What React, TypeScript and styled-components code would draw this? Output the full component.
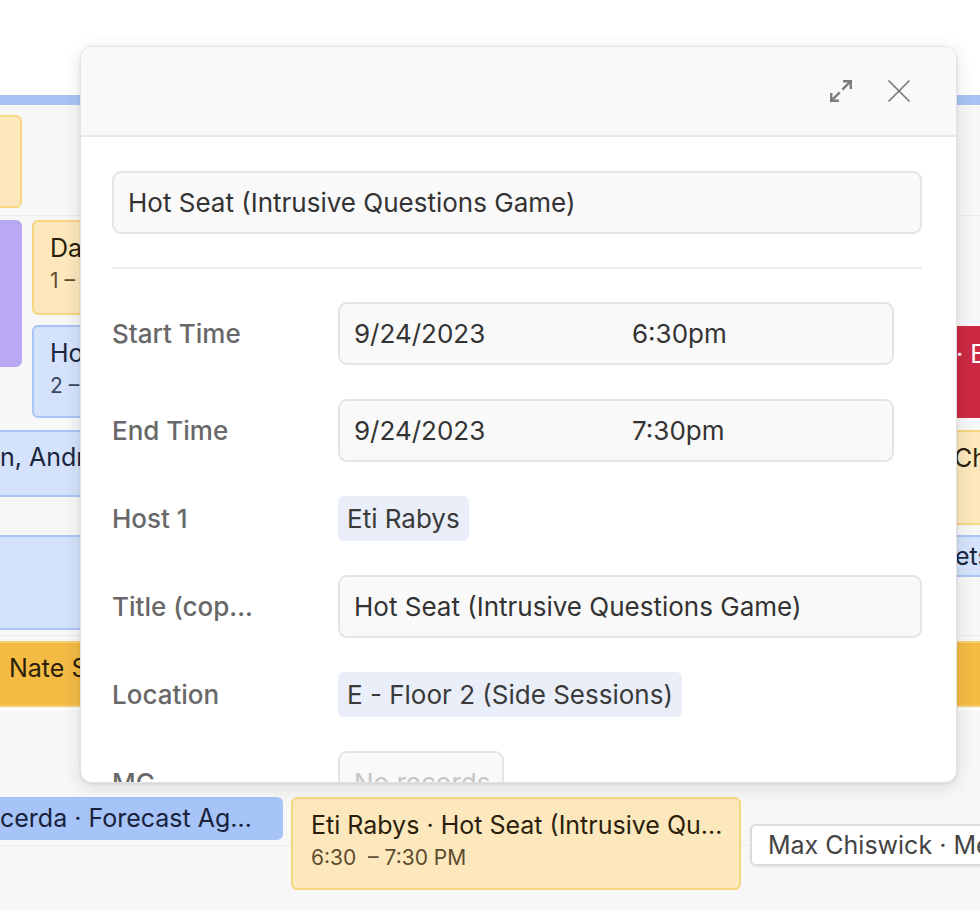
import styled, { createGlobalStyle } from "styled-components";

const GlobalStyle = createGlobalStyle`
  html, body {
    margin: 0;
    padding: 0;
    background: #ffffff;
  }
  body {
    font-family: Inter, "Noto Sans", "Liberation Sans", sans-serif;
    -webkit-font-smoothing: antialiased;
  }
`;

type Tone = "yellow" | "purple" | "blue" | "band" | "gold" | "red" | "solid" | "white";

const tones: Record<Tone, { bg: string; border: string; color: string; sub: string }> = {
  yellow: { bg: "#fce8bc", border: "#f6d67f", color: "#2b1f0c", sub: "#5c4c30" },
  purple: { bg: "#b9a9f4", border: "#b9a9f4", color: "#1f1740", sub: "#3a2f66" },
  blue: { bg: "#d4e3fb", border: "#a9c5f5", color: "#1b2540", sub: "#3b4660" },
  band: { bg: "#d4e3fb", border: "#a9c5f5", color: "#1b2540", sub: "#3b4660" },
  gold: { bg: "#f3bb44", border: "#f6cf72", color: "#2b1f0c", sub: "#4a3810" },
  red: { bg: "#cc2a44", border: "#cc2a44", color: "#ffffff", sub: "#ffe0e4" },
  solid: { bg: "#a6c4f7", border: "#a6c4f7", color: "#18223c", sub: "#2a3656" },
  white: { bg: "#ffffff", border: "#dcdcdc", color: "#444444", sub: "#666666" },
};

const Page = styled.div`
  position: relative;
  width: 980px;
  height: 910px;
  overflow: hidden;
  background: #f7f7f7;
`;

const TopArea = styled.div`
  height: 95px;
  background: #ffffff;
`;

const AllDayBar = styled.div`
  height: 10px;
  background: #a7c4f4;
  box-shadow: 0 2px 3px rgba(0, 0, 0, 0.06);
`;

const Canvas = styled.div`
  position: relative;
  height: 805px;
  background: #f7f7f7;
`;

const HourLine = styled.div<{ $light?: boolean }>`
  position: absolute;
  left: 0;
  right: 0;
  height: 1px;
  background: ${(p) => (p.$light ? "#ffffff" : "#ececec")};
`;

const Event = styled.div<{ $tone: Tone }>`
  position: absolute;
  box-sizing: border-box;
  border-radius: 6px;
  border: 2px solid ${(p) => tones[p.$tone].border};
  background: ${(p) => tones[p.$tone].bg};
  color: ${(p) => tones[p.$tone].color};
  padding: 10px 16px;
  overflow: hidden;
  ${(p) => (p.$tone === "band" ? "border-radius: 0; border-left: none; border-right: none;" : "")}
  ${(p) => (p.$tone === "white" ? "box-shadow: 0 1px 2px rgba(0,0,0,0.08);" : "")}
`;

const EventTitle = styled.div`
  font-size: 25px;
  line-height: 32px;
  white-space: nowrap;
  overflow: hidden;
  text-overflow: ellipsis;
`;

const EventTime = styled.div<{ $tone: Tone }>`
  font-size: 21px;
  line-height: 28px;
  margin-top: 3px;
  color: ${(p) => tones[p.$tone].sub};
  white-space: pre;
`;

const Modal = styled.div`
  position: absolute;
  left: 80px;
  top: 46px;
  width: 877px;
  height: 737px;
  background: #ffffff;
  border-radius: 12px;
  border: 1px solid #e2e2e2;
  box-sizing: border-box;
  box-shadow: 0 4px 18px rgba(0, 0, 0, 0.12), 0 1px 3px rgba(0, 0, 0, 0.08);
  overflow: hidden;
  display: flex;
  flex-direction: column;
`;

const Header = styled.div`
  height: 90px;
  flex: none;
  box-sizing: border-box;
  background: #f9f9f9;
  border-bottom: 2px solid #e8e8e8;
  display: flex;
  align-items: center;
  justify-content: flex-end;
  gap: 30px;
  padding: 0 43px 0 0;
`;

const IconButton = styled.button`
  border: none;
  background: none;
  padding: 0;
  width: 28px;
  height: 28px;
  display: flex;
  align-items: center;
  justify-content: center;
  color: #7a7a7a;
  cursor: pointer;
`;

const Body = styled.div`
  padding: 34px 34px 0 31px;
  display: flex;
  flex-direction: column;
`;

const Field = styled.div<{ $muted?: boolean; $width?: string }>`
  box-sizing: border-box;
  height: 63px;
  width: ${(p) => p.$width ?? "100%"};
  background: #f9f9f9;
  border: 2px solid #e4e4e4;
  border-radius: 9px;
  display: flex;
  align-items: center;
  padding: 0 14px;
  font-size: 26px;
  color: ${(p) => (p.$muted ? "#c6c6c6" : "#333333")};
  white-space: nowrap;
`;

const Divider = styled.div`
  height: 2px;
  background: #ececec;
  margin: 33px 0 33px;
`;

const Rows = styled.div`
  display: flex;
  flex-direction: column;
  gap: 34px;
`;

const Row = styled.div`
  display: grid;
  grid-template-columns: 226px 1fr;
  align-items: center;
`;

const Label = styled.div`
  font-size: 26px;
  font-weight: 500;
  color: #686868;
  white-space: nowrap;
`;

const DateHalf = styled.span`
  flex: 0 0 278px;
`;

const Chip = styled.div`
  justify-self: start;
  height: 45px;
  box-sizing: border-box;
  display: flex;
  align-items: center;
  padding: 0 9px;
  border-radius: 6px;
  background: #e9eef9;
  color: #3a3a3a;
  font-size: 26px;
  white-space: nowrap;
`;

type CalEvent = {
  tone: Tone;
  left: number;
  top: number;
  width: number;
  height: number;
  title?: string;
  time?: string;
  pad?: number;
};

// positions are relative to the canvas (which starts at y=105)
const events: CalEvent[] = [
  { tone: "yellow", left: -20, top: 10, width: 42, height: 93 },
  { tone: "purple", left: -20, top: 115, width: 42, height: 147 },
  { tone: "yellow", left: 32, top: 115, width: 220, height: 95, title: "Dance Party", time: "1 – 2 PM" },
  { tone: "blue", left: 32, top: 220, width: 220, height: 93, title: "Hot Takes", time: "2 – 3 PM" },
  { tone: "band", left: -10, top: 325, width: 400, height: 67, title: "n, Andrew Lee", pad: 10 },
  { tone: "band", left: -10, top: 430, width: 400, height: 95 },
  { tone: "gold", left: -10, top: 536, width: 400, height: 66, title: "Nate Sullivan", pad: 17 },
  { tone: "red", left: 920, top: 221, width: 200, height: 92, title: "· Board", pad: 34 },
  { tone: "yellow", left: 930, top: 325, width: 200, height: 95, title: "Chat", pad: 22 },
  { tone: "band", left: 930, top: 430, width: 200, height: 42, title: "ets", pad: 25 },
  { tone: "gold", left: 930, top: 536, width: 100, height: 66 },
  { tone: "solid", left: -10, top: 692, width: 293, height: 43, title: "cerda · Forecast Aggregation", pad: 8 },
  { tone: "yellow", left: 291, top: 692, width: 450, height: 93, title: "Eti Rabys · Hot Seat (Intrusive Questions Game)", time: "6:30  – 7:30 PM", pad: 18 },
  { tone: "white", left: 750, top: 719, width: 420, height: 42, title: "Max Chiswick · Mentor Hours" },
];

const ExpandIcon = () => (
  <svg width="26" height="26" viewBox="0 0 24 24" fill="none" stroke="currentColor" strokeWidth="2.2" strokeLinecap="square">
    <polyline points="15 3 21 3 21 9" />
    <polyline points="9 21 3 21 3 15" />
    <line x1="21" y1="3" x2="14" y2="10" />
    <line x1="3" y1="21" x2="10" y2="14" />
  </svg>
);

const CloseIcon = () => (
  <svg width="24" height="24" viewBox="0 0 24 24" fill="none" stroke="currentColor" strokeWidth="1.7" strokeLinecap="round">
    <line x1="2" y1="2" x2="22" y2="22" />
    <line x1="22" y1="2" x2="2" y2="22" />
  </svg>
);

export default function App() {
  return (
    <>
      <GlobalStyle />
      <Page>
        <TopArea />
        <AllDayBar />
        <Canvas>
          <HourLine style={{ top: 110 }} />
          <HourLine style={{ top: 530 }} />
          <HourLine $light style={{ top: 604 }} />
          <HourLine style={{ top: 740 }} />
          {events.map((e, i) => (
            <Event
              key={i}
              $tone={e.tone}
              style={{
                left: e.left,
                top: e.top,
                width: e.width,
                height: e.height,
                paddingLeft: e.pad,
                paddingTop: e.height < 50 ? 3 : e.height < 70 ? 9 : 10,
              }}
            >
              {e.title && <EventTitle>{e.title}</EventTitle>}
              {e.time && <EventTime $tone={e.tone}>{e.time}</EventTime>}
            </Event>
          ))}
        </Canvas>

        <Modal>
          <Header>
            <IconButton aria-label="Expand">
              <ExpandIcon />
            </IconButton>
            <IconButton aria-label="Close">
              <CloseIcon />
            </IconButton>
          </Header>
          <Body>
            <Field>Hot Seat (Intrusive Questions Game)</Field>
            <Divider />
            <Rows>
              <Row>
                <Label>Start Time</Label>
                <Field $width="556px">
                  <DateHalf>9/24/2023</DateHalf>
                  <span>6:30pm</span>
                </Field>
              </Row>
              <Row>
                <Label>End Time</Label>
                <Field $width="556px">
                  <DateHalf>9/24/2023</DateHalf>
                  <span>7:30pm</span>
                </Field>
              </Row>
              <Row>
                <Label>Host 1</Label>
                <Chip>Eti Rabys</Chip>
              </Row>
              <Row>
                <Label>Title (cop...</Label>
                <Field>Hot Seat (Intrusive Questions Game)</Field>
              </Row>
              <Row>
                <Label>Location</Label>
                <Chip>E - Floor 2 (Side Sessions)</Chip>
              </Row>
              <Row>
                <Label>MC</Label>
                <Field $muted $width="166px">No records</Field>
              </Row>
            </Rows>
          </Body>
        </Modal>
      </Page>
    </>
  );
}
